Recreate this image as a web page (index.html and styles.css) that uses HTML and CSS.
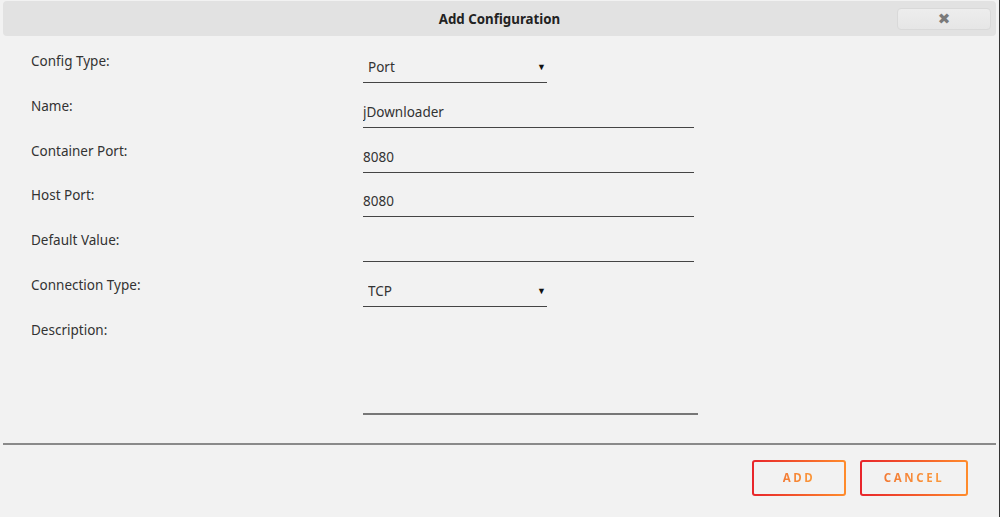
FILE: index.html
```html
<!DOCTYPE html>
<html lang="en">
    <head>
        <meta charset="UTF-8" />
        <meta name="viewport" content="width=device-width, initial-scale=1.0" />
        <title>Add Configuration</title>
        <link rel="stylesheet" href="styles.css">
    </head>
    <body>
        <div class="dialog">
            <header class="dialog-head">
                <h1>Add Configuration</h1>
                <button type="button" class="close-btn">&#10006;</button>
            </header>

            <form id="configForm" class="config-form">
                <div class="row">
                    <label for="configType">Config Type:</label>
                    <div class="select-wrap">
                        <select id="configType">
                            <option>Port</option>
                            <option>Path</option>
                            <option>Variable</option>
                            <option>Device</option>
                        </select>
                    </div>
                </div>
                <div class="row">
                    <label for="name">Name:</label>
                    <input type="text" id="name" value="jDownloader" />
                </div>
                <div class="row">
                    <label for="containerPort">Container Port:</label>
                    <input type="text" id="containerPort" value="8080" />
                </div>
                <div class="row">
                    <label for="hostPort">Host Port:</label>
                    <input type="text" id="hostPort" value="8080" />
                </div>
                <div class="row">
                    <label for="defaultValue">Default Value:</label>
                    <input type="text" id="defaultValue" />
                </div>
                <div class="row">
                    <label for="connType">Connection Type:</label>
                    <div class="select-wrap">
                        <select id="connType">
                            <option>TCP</option>
                            <option>UDP</option>
                        </select>
                    </div>
                </div>
                <div class="row row-desc">
                    <label for="description">Description:</label>
                    <textarea id="description"></textarea>
                </div>
            </form>

            <footer class="dialog-foot">
                <button type="submit" form="configForm" class="btn"><span>ADD</span></button>
                <button type="button" class="btn"><span>CANCEL</span></button>
            </footer>
        </div>
    </body>
</html>
```

FILE: styles.css
```css
* {
    padding: 0;
    margin: 0;
    box-sizing: border-box;
}
body {
    background-color: #f2f2f2;
    font-family: "Noto Sans", "Liberation Sans", sans-serif;
    font-size: 13.5px;
    color: #333;
}
.dialog {
    height: 517px;
    border-right: 1px solid #333;
    padding: 1px 3px 0 3px;
}

/* title bar */
.dialog-head {
    height: 35px;
    background-color: #e2e2e2;
    border-radius: 4px;
    position: relative;
    display: flex;
    align-items: center;
    justify-content: center;
}
.dialog-head h1 {
    font-size: 13.3px;
    font-weight: bold;
    color: #222;
}
.close-btn {
    position: absolute;
    right: 5px;
    top: 7px;
    width: 94px;
    height: 22px;
    border: 1px solid #d9d9d9;
    border-radius: 4px;
    background: linear-gradient(#ededed, #e6e6e6);
    color: #7a7a7a;
    font-size: 15px;
    line-height: 20px;
    font-family: "DejaVu Sans", sans-serif;
}

/* form rows */
.config-form {
    padding: 16px 0 0 28px;
}
.row {
    display: flex;
    align-items: flex-start;
    height: 44.8px;
}
.row label {
    width: 332px;
    line-height: 18px;
}
.row input,
.row select,
.row textarea {
    font-family: inherit;
    font-size: 13.5px;
    color: #333;
    background: transparent;
    border: none;
    outline: none;
}
.row input {
    width: 331px;
    margin-top: 5px;
    height: 26px;
    line-height: 20px;
    padding-bottom: 5px;
    border-bottom: 1px solid #444;
}
.select-wrap {
    position: relative;
    width: 184px;
    margin-top: 5px;
}
.select-wrap select {
    appearance: none;
    width: 100%;
    height: 26px;
    padding: 0 20px 5px 5px;
    border-bottom: 1px solid #444;
}
.select-wrap::after {
    content: "\25BC";
    position: absolute;
    right: 1px;
    top: 3px;
    font-size: 9px;
    color: #111;
    pointer-events: none;
}
.row-desc {
    height: auto;
}
.row textarea {
    width: 335px;
    height: 89px;
    margin-top: 5px;
    resize: none;
    border-bottom: 2px solid #777;
}

/* buttons */
.dialog-foot {
    margin-top: 28px;
    border-top: 2px solid #8a8a8a;
    display: flex;
    justify-content: flex-end;
    gap: 14px;
    padding: 15px 28px 0 0;
}
.btn {
    height: 36px;
    padding: 0;
    border: 2px solid transparent;
    border-radius: 3px;
    background: linear-gradient(#f2f2f2, #f2f2f2) padding-box,
        linear-gradient(90deg, #e8252b, #ff8c2c) border-box;
    font-family: "Noto Sans", sans-serif;
    font-size: 11.5px;
    font-weight: bold;
    letter-spacing: 2.6px;
}
.btn span {
    background: linear-gradient(90deg, #f37a34, #fb9a3c);
    -webkit-background-clip: text;
    background-clip: text;
    color: transparent;
}
.btn:first-child {
    width: 94px;
}
.btn:last-child {
    width: 108px;
}
```
